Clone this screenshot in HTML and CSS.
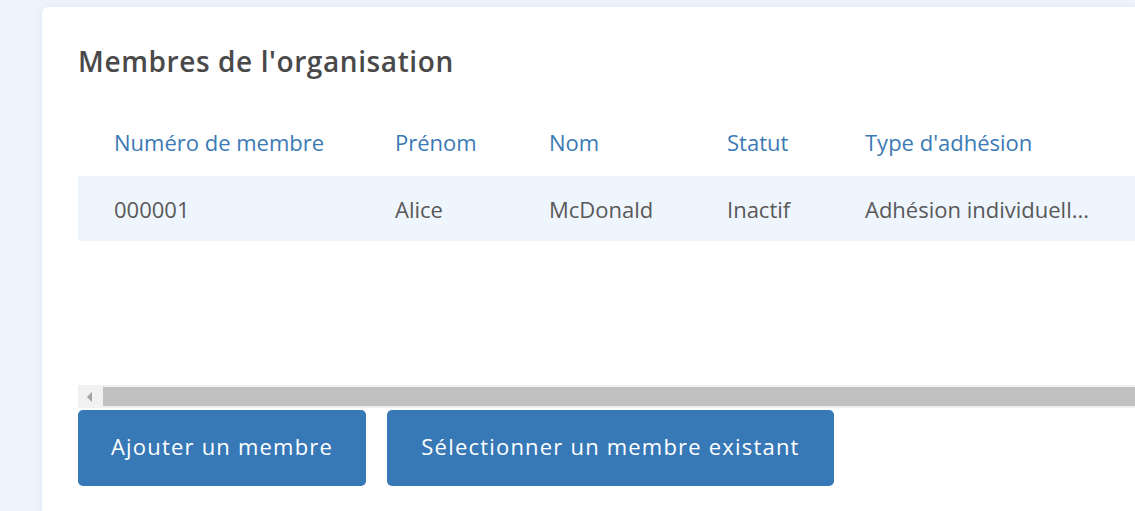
FILE: index.html
```html
<!DOCTYPE html>
<html lang="fr">
<head>
<meta charset="utf-8">
<link rel="stylesheet" href="styles.css">
</head>
<body>
<div class="page">
  <section class="card">
    <h2 class="title">Membres de l'organisation</h2>
    <div class="table-wrap">
      <div class="row head">
        <div class="cell c1">Numéro de membre</div>
        <div class="cell c2">Prénom</div>
        <div class="cell c3">Nom</div>
        <div class="cell c4">Statut</div>
        <div class="cell c5">Type d'adhésion</div>
      </div>
      <div class="row body">
        <div class="cell c1">000001</div>
        <div class="cell c2">Alice</div>
        <div class="cell c3">McDonald</div>
        <div class="cell c4">Inactif</div>
        <div class="cell c5">Adhésion individuell...</div>
      </div>
      <div class="spacer"></div>
      <div class="scrollbar">
        <div class="arrow"></div>
        <div class="thumb"></div>
      </div>
    </div>
    <div class="actions">
      <button class="btn btn-add">Ajouter un membre</button>
      <button class="btn btn-select">Sélectionner un membre existant</button>
    </div>
  </section>
</div>
</body>
</html>
```
FILE: styles.css
```css
html, body {
  margin: 0;
  padding: 0;
  background: #eef4fc;
  overflow: hidden;
}
body {
  font-family: "Open Sans", "Lato", sans-serif;
}
.page {
  padding: 7px 0 0 42px;
  height: 504px;
}
.card {
  background: #ffffff;
  border-radius: 6px 0 0 0;
  box-shadow: 0 0 6px rgba(120, 150, 200, 0.12);
  height: 520px;
  padding: 0 0 0 36px;
  overflow: hidden;
}
.title {
  margin: 0;
  padding-top: 36px;
  height: 113px;
  box-sizing: border-box;
  font-size: 28px;
  font-weight: 600;
  letter-spacing: 0.6px;
  color: #4a4949;
  line-height: 36px;
}
.table-wrap {
  width: 1100px;
}
.row {
  display: flex;
  white-space: nowrap;
}
.row.head {
  height: 56px;
  align-items: center;
  color: #3b7ab5;
  font-size: 22px;
  padding-bottom: 13px;
  box-sizing: border-box;
}
.row.body {
  height: 65px;
  align-items: center;
  background: #eff5fd;
  color: #595959;
  font-size: 22px;
}
.cell {
  padding-left: 36px;
  box-sizing: border-box;
}
.c1 { width: 281px; }
.c2 { width: 154px; }
.c3 { width: 178px; }
.c4 { width: 138px; }
.c5 { width: 313px; }
.spacer {
  height: 144px;
}
.scrollbar {
  display: flex;
  height: 23px;
  background: #f1f1f1;
  align-items: stretch;
  padding: 2px 0 2px 0;
  box-sizing: border-box;
}
.arrow {
  width: 25px;
  position: relative;
}
.arrow::before {
  content: "";
  position: absolute;
  left: 9px;
  top: 5px;
  border-style: solid;
  border-width: 5px 5px 5px 0;
  border-color: transparent #a3a3a3 transparent transparent;
}
.thumb {
  flex: 1;
  background: #c1c1c1;
}
.actions {
  display: flex;
  gap: 21px;
  margin-top: 2px;
}
.btn {
  height: 76px;
  border: none;
  border-radius: 5px;
  background: #3778b6;
  color: #ffffff;
  font-family: "Open Sans", "Lato", sans-serif;
  font-size: 22px;
  letter-spacing: 1.2px;
  padding: 0 0 4px 0;
}
.btn-add { width: 288px; }
.btn-select { width: 447px; }
```
